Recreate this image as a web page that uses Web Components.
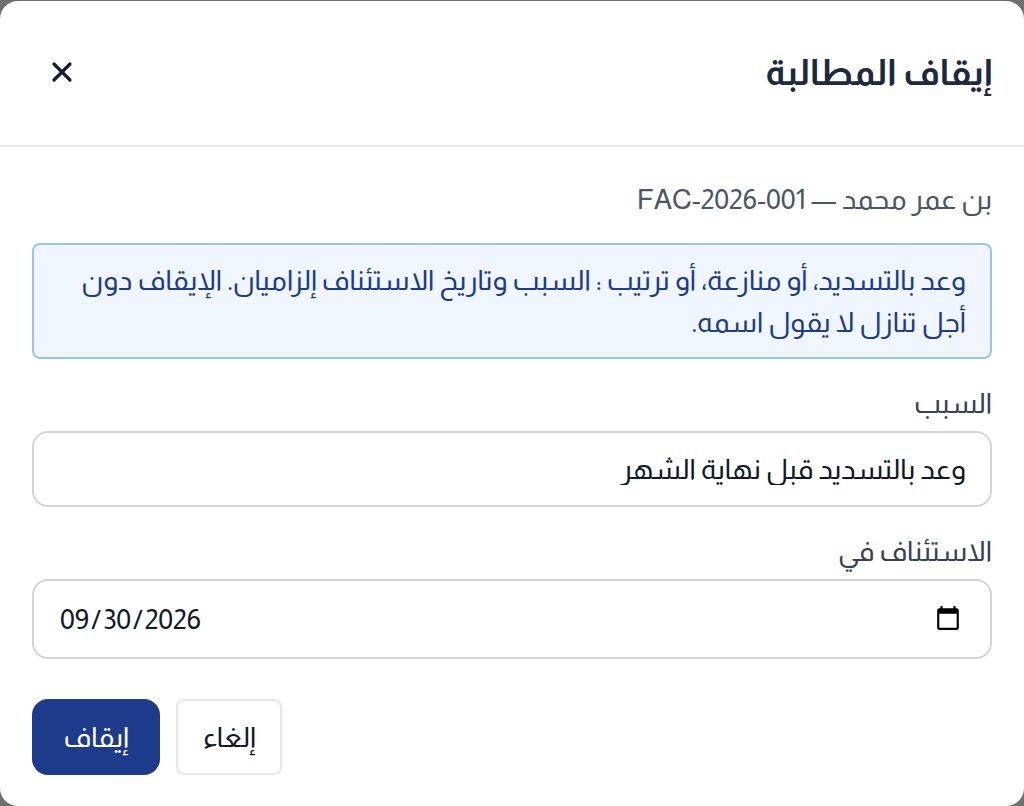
<!DOCTYPE html>
<html lang="ar" dir="rtl">
<head>
<meta charset="utf-8">
<title>إيقاف المطالبة</title>
<style>
  html, body { margin: 0; height: 100%; background: #6f6f6f; }
  body { font-family: Almarai, "Noto Sans", sans-serif; overflow: hidden; padding-top: 1px; box-sizing: border-box; }
</style>
</head>
<body>
<template id="dialog-tpl">
  <style>
    :host { display: block; height: 805px; background: #fff; border-radius: 18px; overflow: hidden; }
    header { display: flex; align-items: center; justify-content: space-between; height: 144px; padding: 0 32px; border-bottom: 2px solid #e5e7eb; }
    h2 { margin: 0; font-size: 36px; font-weight: 700; color: #1e293b; line-height: 48px; }
    button { all: unset; display: flex; width: 60px; height: 60px; align-items: center; justify-content: center; }
    svg { display: block; }
    .body { padding: 32px; display: flex; flex-direction: column; }
  </style>
  <header>
    <h2><slot name="title"></slot></h2>
    <button aria-label="إغلاق">
      <svg width="24" height="24" viewBox="0 0 24 24" fill="none" stroke="#1a1a2e" stroke-width="3.2" stroke-linecap="round"><path d="M4 3 20 19M20 3 4 19"/></svg>
    </button>
  </header>
  <div class="body"><slot></slot></div>
</template>

<template id="callout-tpl">
  <style>
    :host { display: block; margin-top: 22px; padding: 15px 24px 13px; background: #eff6ff; border: 2px solid #93c5f0; border-radius: 8px; color: #1e3a8a; font-size: 28px; line-height: 42px; }
  </style>
  <slot></slot>
</template>

<template id="field-tpl">
  <style>
    :host { display: block; margin-top: 24px; }
    label { display: block; margin-bottom: 6px; font-size: 28px; line-height: 42px; color: #374151; }
    input { display: block; box-sizing: border-box; width: 100%; margin: 0; padding: 0 24px; border: 2px solid #d4d4d8; border-radius: 16px; background: #fff; color: #111827; font: inherit; font-size: 28px; outline: none; }
    input[type=text] { height: 76px; }
    input[type=date] { height: 80px; padding: 0 26px 0 25px; }
    input[type=date]::-webkit-datetime-edit-text { padding: 0 1px; }
  </style>
  <label id="l"></label>
  <input id="i">
</template>

<template id="actions-tpl">
  <style>
    :host { display: flex; gap: 16px; margin-top: 40px; justify-content: flex-end; }
    button { height: 76px; font: inherit; font-size: 28px; cursor: pointer; }
    .cancel { background: #fff; border: 2px solid #e5e7eb; border-radius: 8px; color: #111827; padding: 0 25px; }
    .stop { background: #1e3a8a; border: 2px solid #1e3a8a; border-radius: 16px; color: #fff; padding: 0 29.5px; }
  </style>
  <button class="cancel">إلغاء</button>
  <button class="stop">إيقاف</button>
</template>

<stop-dialog>
  <span slot="title">إيقاف المطالبة</span>
  <claim-subtitle>بن عمر محمد — FAC-2026-001</claim-subtitle>
  <info-callout>وعد بالتسديد، أو منازعة، أو ترتيب : السبب وتاريخ الاستئناف إلزاميان. الإيقاف دون أجل تنازل لا يقول اسمه.</info-callout>
  <form-field label="السبب" type="text" value="وعد بالتسديد قبل نهاية الشهر"></form-field>
  <form-field label="الاستئناف في" type="date" value="2026-09-30"></form-field>
  <dialog-actions></dialog-actions>
</stop-dialog>

<script>
  class TplElement extends HTMLElement {
    constructor(id) {
      super();
      this.attachShadow({ mode: "open" });
      this.shadowRoot.appendChild(document.getElementById(id).content.cloneNode(true));
    }
  }
  class StopDialog extends TplElement { constructor() { super("dialog-tpl"); } }
  class InfoCallout extends TplElement { constructor() { super("callout-tpl"); } }
  class DialogActions extends TplElement { constructor() { super("actions-tpl"); } }
  class ClaimSubtitle extends HTMLElement {
    constructor() {
      super();
      this.attachShadow({ mode: "open" });
      this.shadowRoot.innerHTML = `<style>:host { display: block; font-size: 28px; line-height: 42px; color: #4b5563; }</style><slot></slot>`;
    }
  }
  class FormField extends TplElement {
    constructor() { super("field-tpl"); }
    connectedCallback() {
      const input = this.shadowRoot.getElementById("i");
      const type = this.getAttribute("type");
      this.shadowRoot.getElementById("l").textContent = this.getAttribute("label");
      input.type = type;
      input.value = this.getAttribute("value");
      if (type === "date") input.dir = "ltr";
    }
  }
  customElements.define("stop-dialog", StopDialog);
  customElements.define("info-callout", InfoCallout);
  customElements.define("dialog-actions", DialogActions);
  customElements.define("claim-subtitle", ClaimSubtitle);
  customElements.define("form-field", FormField);
</script>
</body>
</html>
